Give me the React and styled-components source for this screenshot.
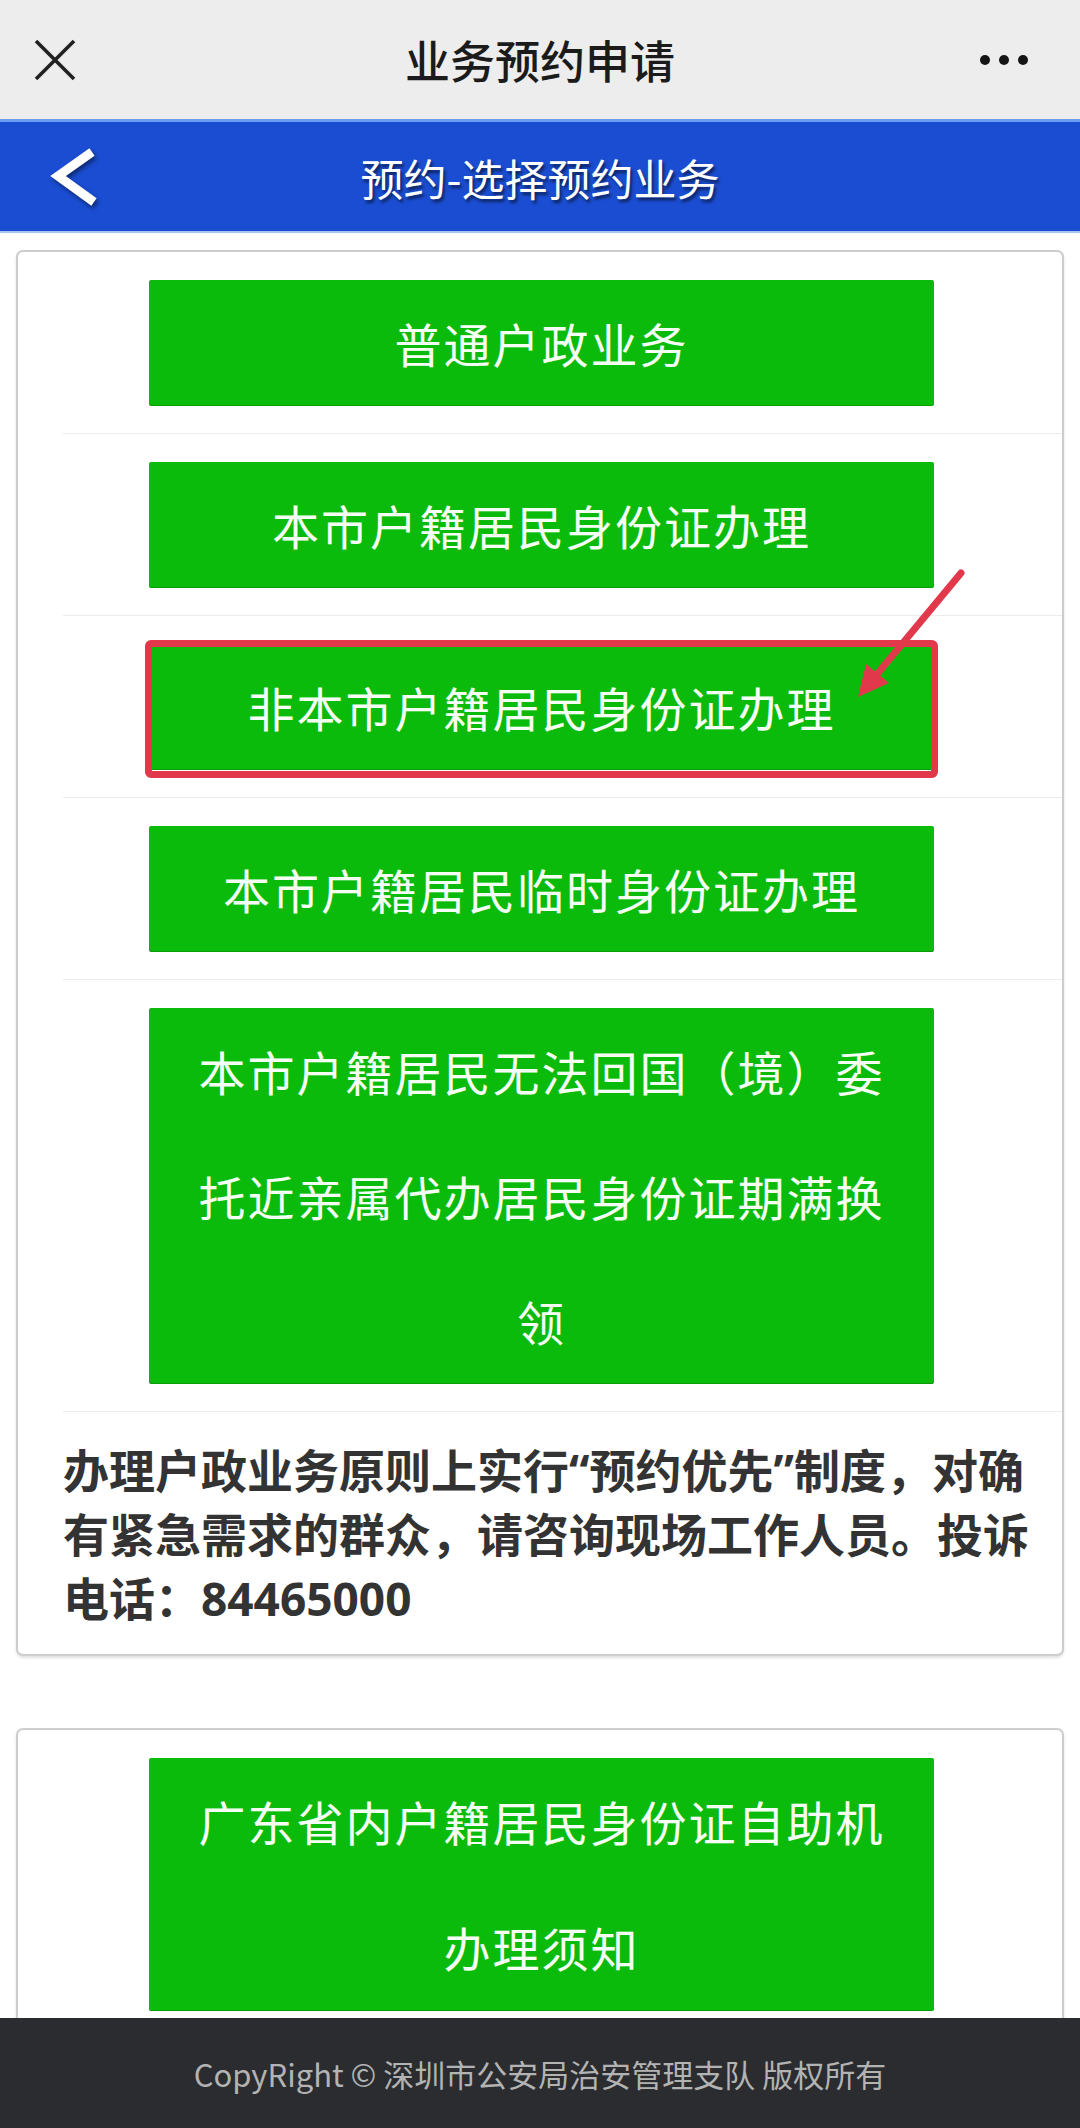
import React from "react";
import styled, { createGlobalStyle } from "styled-components";

const Global = createGlobalStyle`
  html, body { margin: 0; padding: 0; background: #ffffff; }
  body { font-family: "Noto Sans CJK SC", "Noto Sans", sans-serif; }
  * { box-sizing: border-box; }
`;

const Page = styled.div`
  width: 1080px;
  height: 2128px;
  display: flex;
  flex-direction: column;
  overflow: hidden;
  background: #ffffff;
`;

const TopBar = styled.header`
  height: 119px;
  flex: none;
  background: #ededed;
  display: grid;
  grid-template-columns: 1fr auto 1fr;
  align-items: center;
`;

const TopTitle = styled.h1`
  margin: 0;
  font-size: 45px;
  font-weight: 500;
  color: #1b1b1b;
`;

const CloseButton = styled.span`
  justify-self: start;
  margin-left: 34px;
  display: flex;
`;

const MoreButton = styled.span`
  justify-self: end;
  margin-right: 52px;
  display: flex;
`;

const NavBar = styled.nav`
  height: 114px;
  flex: none;
  background: #1a4dd1;
  border-top: 3px solid #6c9cf0;
  border-bottom: 2px solid #a9c4f3;
  display: grid;
  grid-template-columns: 1fr auto 1fr;
  align-items: center;
`;

const BackButton = styled.span`
  justify-self: start;
  margin-left: 46px;
  display: flex;
  filter: drop-shadow(2px 3px 2px rgba(0, 0, 0, 0.45));
`;

const NavTitle = styled.h2`
  margin: 0;
  font-size: 43px;
  font-weight: 400;
  color: #ffffff;
  text-shadow: 2px 3px 3px rgba(0, 0, 0, 0.55);
`;

const Content = styled.main`
  flex: 1;
  min-height: 0;
  overflow: hidden;
  padding: 17px 16px 0;
  display: flex;
  flex-direction: column;
  gap: 72px;
`;

const Card = styled.section`
  position: relative;
  flex: none;
  background: #ffffff;
  border: 2px solid #cdcdcd;
  border-radius: 7px;
  box-shadow: 0 2px 3px rgba(0, 0, 0, 0.12);
`;

const Row = styled.div`
  margin-left: 45px;
  padding: 28px 128px 28px 86px;
  border-bottom: ${(p) => (p.$last ? "none" : "1px solid #ebebeb")};
`;

const ButtonWrap = styled.div`
  position: relative;
`;

const GreenButton = styled.button`
  display: block;
  width: 100%;
  padding: 0 30px;
  border: none;
  border-radius: 2px;
  background: #0bbb0b;
  box-shadow: 0 1px 0 #079d07;
  color: #f6fff6;
  font-family: "Noto Sans CJK SC", "Noto Sans", sans-serif;
  font-size: 47px;
  font-weight: 400;
  letter-spacing: 2px;
  line-height: ${(p) => p.$lh || 125}px;
  text-align: center;
  cursor: pointer;
`;

const Highlight = styled.span`
  position: absolute;
  left: -4px;
  right: -4px;
  top: -4px;
  bottom: -9px;
  border: 7px solid #e1394b;
  border-radius: 6px;
  pointer-events: none;
`;

const Notice = styled.p`
  margin: 0 0 0 45px;
  padding: 26px 20px 24px 0;
  font-family: "Noto Sans", "Noto Sans CJK SC", sans-serif;
  font-size: 46px;
  font-weight: 700;
  line-height: 64px;
  color: #333333;
`;

const ArrowSvg = styled.svg`
  position: absolute;
  left: 820px;
  top: 300px;
  pointer-events: none;
`;

const Footer = styled.footer`
  height: 110px;
  flex: none;
  background: #2a2c2f;
  color: #b3b3b3;
  font-size: 31px;
  display: flex;
  align-items: center;
  justify-content: center;
`;

const items = [
  { text: "普通户政业务" },
  { text: "本市户籍居民身份证办理" },
  { text: "非本市户籍居民身份证办理", highlight: true },
  { text: "本市户籍居民临时身份证办理" },
  { text: "本市户籍居民无法回国（境）委托近亲属代办居民身份证期满换领" },
];

export default function App() {
  return (
    <>
      <Global />
      <Page>
        <TopBar>
          <CloseButton>
            <svg width="42" height="42" viewBox="0 0 42 42">
              <path d="M2 2 L40 40 M40 2 L2 40" stroke="#222" strokeWidth="3.6" fill="none" />
            </svg>
          </CloseButton>
          <TopTitle>业务预约申请</TopTitle>
          <MoreButton>
            <svg width="48" height="12" viewBox="0 0 48 12">
              <circle cx="5" cy="6" r="5" fill="#151515" />
              <circle cx="24" cy="6" r="5" fill="#151515" />
              <circle cx="43" cy="6" r="5" fill="#151515" />
            </svg>
          </MoreButton>
        </TopBar>

        <NavBar>
          <BackButton>
            <svg width="60" height="70" viewBox="0 0 60 70">
              <polyline
                points="46,10 12,34 48,60"
                stroke="#ffffff"
                strokeWidth="9"
                fill="none"
                strokeLinejoin="miter"
              />
            </svg>
          </BackButton>
          <NavTitle>预约-选择预约业务</NavTitle>
          <span />
        </NavBar>

        <Content>
          <Card>
            {items.map((it) => (
              <Row key={it.text}>
                <ButtonWrap>
                  <GreenButton>{it.text}</GreenButton>
                  {it.highlight && <Highlight />}
                </ButtonWrap>
              </Row>
            ))}
            <Notice>
              办理户政业务原则上实行“预约优先”制度，对确有紧急需求的群众，请咨询现场工作人员。投诉电话：84465000
            </Notice>
            <ArrowSvg width="150" height="170" viewBox="0 0 150 170">
              <line x1="123" y1="21" x2="40" y2="121" stroke="#e1394b" strokeWidth="7" strokeLinecap="round" />
              <polygon points="20,145 51,131 28,112" fill="#e1394b" />
            </ArrowSvg>
          </Card>

          <Card>
            <Row $last>
              <ButtonWrap>
                <GreenButton $lh={126}>广东省内户籍居民身份证自助机办理须知</GreenButton>
              </ButtonWrap>
            </Row>
          </Card>
        </Content>

        <Footer>CopyRight © 深圳市公安局治安管理支队 版权所有</Footer>
      </Page>
    </>
  );
}
